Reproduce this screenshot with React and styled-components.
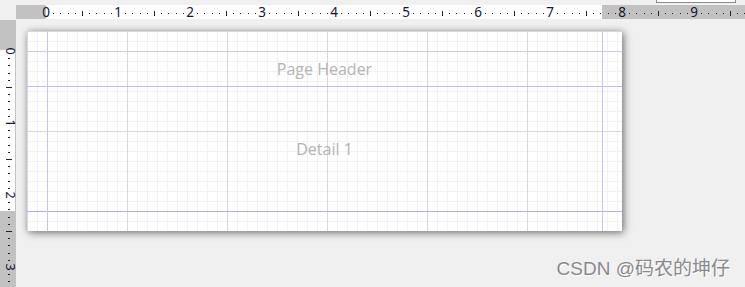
import styled, { createGlobalStyle } from "styled-components";

const INCH = 72;
const TENTH = INCH / 10;

const GlobalStyle = createGlobalStyle`
  html, body {
    margin: 0;
    padding: 0;
    background: #f0f0f0;
    overflow: hidden;
  }
`;

export default function App() {
  return (
    <>
      <GlobalStyle />
      <Workspace>
        <Corner />
        <TopRulerWrap>
          <TopRuler />
        </TopRulerWrap>
        <LeftRuler />
        <Canvas>
          <Page>
            <Band $height={35}>
              <BandLabel>Page Header</BandLabel>
            </Band>
            <Band $height={125}>
              <BandLabel>Detail 1</BandLabel>
            </Band>
          </Page>
        </Canvas>
        <ZoomBox />
        <Watermark>CSDN @码农的坤仔</Watermark>
      </Workspace>
    </>
  );
}

function TopRuler() {
  const width = 729;
  const origin = 30;
  const marks = [];
  for (let i = 0; origin + i * TENTH < width; i++) {
    const x = Math.round(origin + i * TENTH);
    if (i % 10 === 0) {
      marks.push(
        <text key={i} x={x} y={12} textAnchor="middle" fontSize="13.5" fill="#141433">
          {i / 10}
        </text>
      );
    } else if (i % 10 === 5) {
      marks.push(<rect key={i} x={x} y={6} width={1} height={5} fill="#222" />);
    } else {
      marks.push(<rect key={i} x={x} y={8} width={1} height={1} fill="#222" />);
    }
  }
  return (
    <RulerSvg width={width} height={14}>
      <rect x={0} y={0} width={width} height={14} fill="#c2c2c2" />
      <rect x={origin} y={0} width={556} height={14} fill="#ffffff" />
      {marks}
    </RulerSvg>
  );
}

function LeftRuler() {
  const height = 267;
  const origin = 31;
  const marks = [];
  for (let i = 0; origin + i * TENTH < height; i++) {
    const y = Math.round(origin + i * TENTH);
    if (i % 10 === 0) {
      marks.push(
        <text
          key={i}
          x={10.5}
          y={y}
          textAnchor="middle"
          dominantBaseline="central"
          fontSize="12.5"
          fill="#141433"
          transform={`rotate(90 10.5 ${y})`}
        >
          {i / 10}
        </text>
      );
    } else if (i % 10 === 5) {
      marks.push(<rect key={i} x={6} y={y} width={6} height={1} fill="#222" />);
    } else {
      marks.push(<rect key={i} x={8} y={y} width={2} height={1} fill="#222" />);
    }
  }
  return (
    <RulerSvg width={16} height={height}>
      <rect x={0} y={0} width={16} height={height} fill="#c2c2c2" />
      <rect x={0} y={30} width={15} height={161} fill="#ffffff" />
      {marks}
    </RulerSvg>
  );
}

const Workspace = styled.div`
  position: relative;
  width: 745px;
  height: 287px;
  display: grid;
  grid-template-columns: 16px 1fr;
  grid-template-rows: 20px 1fr;
  overflow: hidden;
`;

const Corner = styled.div`
  background: #f0f0f0;
`;

const TopRulerWrap = styled.div`
  padding-top: 5px;
`;

const RulerSvg = styled.svg`
  display: block;
  overflow: visible;
  font-family: "Noto Sans", sans-serif;
`;

const Canvas = styled.div`
  padding: 11px 0 0 11px;
`;

const guide = (color, x, y, w, h) =>
  `linear-gradient(${color}, ${color}) ${x} ${y} / ${w} ${h} no-repeat`;

const Page = styled.div`
  width: 595px;
  height: 200px;
  box-sizing: border-box;
  padding: 20px 20px 20px;
  display: flex;
  flex-direction: column;
  background:
    ${guide("#c4c4f6", "20px", "0", "1px", "100%")},
    ${guide("#c4c4f6", "575px", "0", "1px", "100%")},
    ${guide("#cacaf4", "0", "20px", "100%", "1px")},
    ${guide("#bcbcf6", "0", "55px", "100%", "1px")},
    ${guide("#aeaeee", "0", "180px", "100%", "1px")},
    linear-gradient(to right, #d8d8d8 1px, transparent 1px) 0 0 / 100px 100px,
    linear-gradient(to bottom, #d8d8d8 1px, transparent 1px) 0 0 / 100px 100px,
    linear-gradient(to right, #f2f2f2 1px, transparent 1px) 0 0 / 10px 10px,
    linear-gradient(to bottom, #f2f2f2 1px, transparent 1px) 0 0 / 10px 10px,
    #ffffff;
  box-shadow: 2px 2px 8px rgba(0, 0, 0, 0.45), 0 0 6px rgba(0, 0, 0, 0.15);
`;

const Band = styled.div`
  height: ${(p) => p.$height}px;
  display: flex;
  align-items: center;
  justify-content: center;
`;

const BandLabel = styled.span`
  font-family: "Open Sans", "Noto Sans", sans-serif;
  font-size: 16px;
  color: #b4b4b4;
`;

const ZoomBox = styled.div`
  position: absolute;
  top: -10px;
  left: 656px;
  width: 78px;
  height: 11px;
  border: 1px solid #8a8a8a;
  background: #ffffff;
`;

const Watermark = styled.div`
  position: absolute;
  right: 15px;
  bottom: 7px;
  font-family: "Liberation Sans", "Noto Sans CJK SC", sans-serif;
  font-size: 19px;
  color: #8a8a8a;
  text-shadow: 1px 1px 1px rgba(255, 255, 255, 0.9);
  white-space: nowrap;
`;
